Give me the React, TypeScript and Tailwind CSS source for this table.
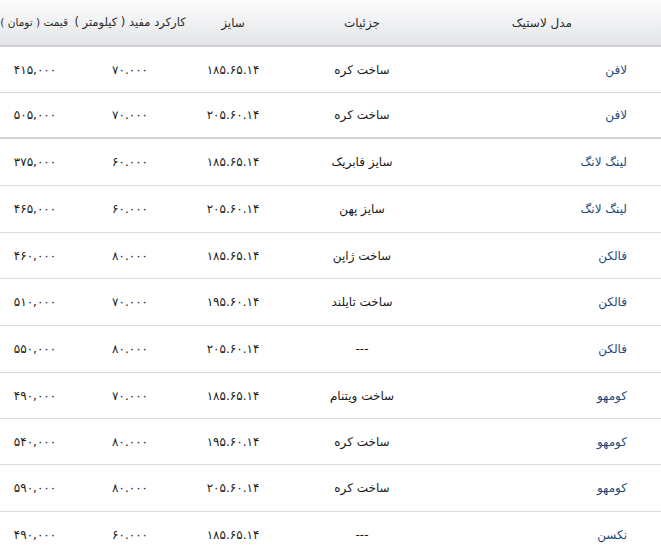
const rows = [
  { model: "لافن", details: "ساخت کره", size: "۱۸۵.۶۵.۱۴", km: "۷۰.۰۰۰", price: "۴۱۵,۰۰۰", h: "h-[46px]" },
  { model: "لافن", details: "ساخت کره", size: "۲۰۵.۶۰.۱۴", km: "۷۰.۰۰۰", price: "۵۰۵,۰۰۰", h: "h-[46px]", thick: true },
  { model: "لینگ لانگ", details: "سایز فابریک", size: "۱۸۵.۶۵.۱۴", km: "۶۰.۰۰۰", price: "۳۷۵,۰۰۰", h: "h-[47px]" },
  { model: "لینگ لانگ", details: "سایز پهن", size: "۲۰۵.۶۰.۱۴", km: "۶۰.۰۰۰", price: "۴۶۵,۰۰۰", h: "h-[47px]" },
  { model: "فالکن", details: "ساخت ژاپن", size: "۱۸۵.۶۵.۱۴", km: "۸۰.۰۰۰", price: "۴۶۰,۰۰۰", h: "h-[46px]" },
  { model: "فالکن", details: "ساخت تایلند", size: "۱۹۵.۶۰.۱۴", km: "۷۰.۰۰۰", price: "۵۱۰,۰۰۰", h: "h-[47px]" },
  { model: "فالکن", details: "---", size: "۲۰۵.۶۰.۱۴", km: "۸۰.۰۰۰", price: "۵۵۰,۰۰۰", h: "h-[47px]" },
  { model: "کومهو", details: "ساخت ویتنام", size: "۱۸۵.۶۵.۱۴", km: "۷۰.۰۰۰", price: "۴۹۰,۰۰۰", h: "h-[46px]" },
  { model: "کومهو", details: "ساخت کره", size: "۱۹۵.۶۰.۱۴", km: "۸۰.۰۰۰", price: "۵۴۰,۰۰۰", h: "h-[46px]" },
  { model: "کومهو", details: "ساخت کره", size: "۲۰۵.۶۰.۱۴", km: "۸۰.۰۰۰", price: "۵۹۰,۰۰۰", h: "h-[47px]" },
  { model: "نکسن", details: "---", size: "۱۸۵.۶۵.۱۴", km: "۶۰.۰۰۰", price: "۴۹۰,۰۰۰", h: "h-[46px]" },
];

const cols = "grid grid-cols-[213px_172px_86px_120px_70px]";

export default function App() {
  return (
    <div
      dir="rtl"
      className="w-[661px] h-[555px] overflow-hidden bg-white text-[12px] text-[#1b1b1b]"
      style={{ fontFamily: '"DejaVu Sans", "Noto Sans", sans-serif' }}
    >
      {/* header */}
      <div className={`${cols} h-[47px] items-center border-b-2 border-[#cfd1d4] bg-gradient-to-b from-[#fdfdfd] to-[#e3e5e8] text-[#2b2b2b]`}>
        <div className="pr-[89px] text-right">مدل لاستیک</div>
        <div className="flex justify-center whitespace-nowrap">جزئیات</div>
        <div className="flex justify-center whitespace-nowrap">سایز</div>
        <div className="flex justify-center whitespace-nowrap text-[11.5px]">کارکرد مفید ( کیلومتر )</div>
        <div className="pr-[2px] text-right whitespace-nowrap text-[10.5px]">قیمت ( تومان )</div>
      </div>
      {rows.map((r, i) => (
        <div
          key={i}
          className={`${cols} ${r.h} items-center ${r.thick ? "border-b-2 border-[#d2d2d2]" : "border-b border-[#dcdcdc]"}`}
        >
          <div className="pr-[34px] text-right text-[#1f4a7c]">{r.model}</div>
          <div className="flex justify-center whitespace-nowrap">{r.details}</div>
          <div className="flex justify-center whitespace-nowrap">{r.size}</div>
          <div className="flex justify-center whitespace-nowrap">{r.km}</div>
          <div className="flex justify-center whitespace-nowrap">{r.price}</div>
        </div>
      ))}
    </div>
  );
}
